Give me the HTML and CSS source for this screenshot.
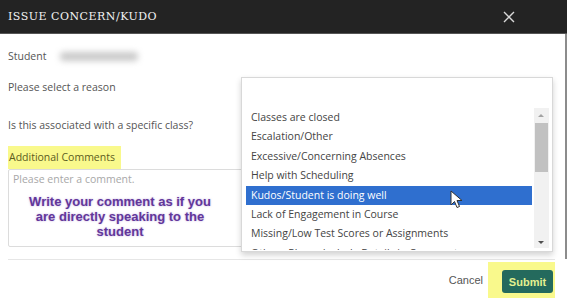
FILE: index.html
```html
<!DOCTYPE html>
<html lang="en">
  <head>
    <meta charset="UTF-8" />
    <meta name="viewport" content="width=device-width, initial-scale=1.0" />
    <title>Issue Concern/Kudo</title>
    <link rel="stylesheet" href="styles.css">
  </head>
  <body>
    <div class="dialog">
      <div class="dialog-header">
        <h1 class="dialog-title">ISSUE CONCERN/KUDO</h1>
        <button class="close" aria-label="Close">
          <svg width="12" height="12" viewBox="0 0 12 12">
            <path d="M1 1 L11 11 M11 1 L1 11" stroke="#d8d8d8" stroke-width="1.4" fill="none" />
          </svg>
        </button>
      </div>

      <div class="dialog-body">
        <div class="row row-student">
          <span class="label">Student</span>
          <span class="student-name"></span>
        </div>

        <div class="row row-reason">
          <span class="label">Please select a reason</span>
          <div class="select-wrap">
            <div class="select-field"></div>
            <div class="select-list">
              <ul class="options">
                <li>Classes are closed</li>
                <li>Escalation/Other</li>
                <li>Excessive/Concerning Absences</li>
                <li>Help with Scheduling</li>
                <li class="selected">Kudos/Student is doing well</li>
                <li>Lack of Engagement in Course</li>
                <li>Missing/Low Test Scores or Assignments</li>
                <li>Other - Please Include Details in Comments</li>
              </ul>
              <div class="scrollbar">
                <span class="arrow up"></span>
                <span class="thumb"></span>
                <span class="arrow down"></span>
              </div>
            </div>
            <svg class="cursor" width="14" height="20" viewBox="0 0 14 20">
              <path d="M1 1 L1 15 L4.5 11.5 L7 17.5 L9.5 16.5 L7 10.5 L12 10.5 Z" fill="#fff" stroke="#333" stroke-width="1" stroke-linejoin="round" />
            </svg>
          </div>
        </div>

        <div class="row row-class">
          <span class="label">Is this associated with a specific class?</span>
        </div>

        <div class="comments">
          <span class="comments-label">Additional Comments</span>
          <div class="textarea">
            <span class="placeholder">Please enter a comment.</span>
            <p class="hint">Write your comment as if you are directly speaking to the student</p>
          </div>
        </div>
      </div>

      <div class="dialog-footer">
        <button class="cancel">Cancel</button>
        <span class="submit-mark">
          <button class="submit">Submit</button>
        </span>
      </div>
    </div>
  </body>
</html>
```

FILE: styles.css
```css
body {
  margin: 0;
  padding: 0;
  background-color: #fff;
  font-family: "Open Sans", Arial, sans-serif;
  color: #555;
}

.dialog {
  width: 567px;
  height: 298px;
  overflow: hidden;
}

.dialog-header {
  height: 34px;
  background-color: #232323;
  display: flex;
  align-items: center;
  justify-content: space-between;
  padding: 0 0 0 8px;
  border-bottom: 1px solid #555;
  box-sizing: border-box;
}

.dialog-title {
  margin: 0;
  font-family: "DejaVu Serif", "Liberation Serif", serif;
  font-size: 11px;
  font-weight: normal;
  letter-spacing: 0.5px;
  color: #f2f2f2;
}

.close {
  border: none;
  background: none;
  padding: 0;
  margin-right: 52px;
  width: 12px;
  height: 12px;
  display: flex;
  cursor: pointer;
}

.dialog-body {
  padding: 12px 12px 0 8px;
  border-right: 2px solid #8c8c8c;
  height: 225px;
  box-sizing: border-box;
}

.row {
  display: flex;
  align-items: flex-start;
  font-size: 10.5px;
  line-height: 20px;
}

.row-student {
  height: 20px;
  align-items: center;
}

.label {
  width: 233px;
  flex-shrink: 0;
}

.row-student .label {
  width: 52px;
}

.student-name {
  width: 78px;
  height: 9px;
  background-color: #c9c9c9;
  border-radius: 4px;
  filter: blur(3px);
}

.row-reason {
  margin-top: 11px;
  position: relative;
  z-index: 2;
}

.select-wrap {
  position: relative;
  width: 312px;
}

.select-field {
  height: 30px;
  border: 1px solid #d8d8d8;
  border-bottom: none;
  box-sizing: border-box;
  background: #fff;
}

.select-list {
  position: absolute;
  top: 0;
  left: 0;
  width: 312px;
  height: 175px;
  padding: 30px 3px 2px 4px;
  box-sizing: border-box;
  border: 1px solid #d8d8d8;
  box-shadow: 0 3px 6px rgba(0, 0, 0, 0.18);
  background: #fff;
  display: flex;
  align-items: flex-start;
  pointer-events: none;
}

.options {
  list-style: none;
  margin: 0;
  padding: 0;
  flex: 1;
  height: 142px;
  overflow: hidden;
  background: #fff;
  font-size: 10.5px;
}

.options li {
  height: 19.4px;
  line-height: 19.4px;
  padding-left: 5px;
  color: #444;
  white-space: nowrap;
}

.options li.selected {
  background-color: #2f6fcf;
  color: #fff;
}

.scrollbar {
  width: 15px;
  height: 140px;
  margin-left: 2px;
  background-color: #f1f1f1;
  position: relative;
}

.thumb {
  position: absolute;
  top: 15px;
  left: 1px;
  width: 13px;
  height: 49px;
  background-color: #c1c1c1;
}

.arrow {
  position: absolute;
  left: 4px;
  width: 0;
  height: 0;
  border-left: 3px solid transparent;
  border-right: 3px solid transparent;
}

.arrow.up {
  top: 6px;
  border-bottom: 3px solid #a3a3a3;
}

.arrow.down {
  bottom: 4px;
  border-top: 3px solid #505050;
}

.cursor {
  position: absolute;
  left: 209px;
  top: 113px;
}

.row-class {
  margin-top: 8px;
}

.comments {
  margin-top: 11px;
}

.comments-label {
  display: inline-block;
  font-size: 10.5px;
  line-height: 23px;
  padding: 0 6px 0 1px;
  background-color: #f9f98c;
  color: #5c5c1e;
  vertical-align: top;
}

.textarea {
  height: 78px;
  border: 1px solid #dcdcdc;
  border-radius: 2px;
  box-sizing: border-box;
  padding: 2px 4px;
}

.placeholder {
  display: block;
  font-size: 10.5px;
  line-height: 15px;
  color: #a8a8a8;
}

.hint {
  width: 200px;
  margin: 7px 0 0 7px;
  font-family: "Liberation Sans", Arial, sans-serif;
  font-size: 13px;
  font-weight: bold;
  line-height: 15px;
  text-align: center;
  color: #62379a;
  text-shadow: 0 0 2px rgba(150, 110, 200, 0.6);
}

.dialog-footer {
  margin: 0 12px 0 8px;
  padding-top: 2px;
  border-top: 1px solid #e6e6e6;
  display: flex;
  justify-content: flex-end;
  align-items: flex-start;
  gap: 5px;
}

.cancel {
  border: none;
  background: none;
  padding: 0;
  margin-top: 12px;
  font-family: "Liberation Sans", Arial, sans-serif;
  font-size: 11px;
  color: #555;
  cursor: pointer;
}

.submit-mark {
  display: flex;
  padding: 8px 2px 5px 14px;
  background-color: #f9f98c;
}

.submit {
  width: 51px;
  height: 23px;
  border: none;
  border-radius: 3px;
  background-color: #246a5d;
  color: #e4f08f;
  font-family: "Liberation Sans", Arial, sans-serif;
  font-size: 11px;
  font-weight: bold;
  cursor: pointer;
}
```
